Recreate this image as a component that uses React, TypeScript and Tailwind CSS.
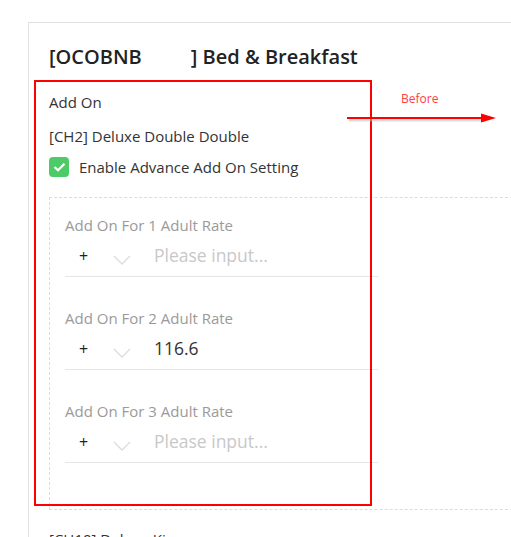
import React from "react";

const rates = [
  { label: "Add On For 1 Adult Rate", value: "" },
  { label: "Add On For 2 Adult Rate", value: "116.6" },
  { label: "Add On For 3 Adult Rate", value: "" },
];

function Chevron() {
  return (
    <svg width="18" height="10" viewBox="0 0 18 10" className="mt-2">
      <path d="M1 1 L9 9 L17 1" fill="none" stroke="#dcdcdc" strokeWidth="1.3" />
    </svg>
  );
}

export default function App() {
  return (
    <div className="relative h-[537px] w-[511px] overflow-hidden bg-white font-['Open_Sans',sans-serif] text-[#333]">
      {/* Card */}
      <div className="ml-[28px] mt-[22px] w-[520px] border border-r-0 border-b-0 border-[#e0e0e0] pl-[20px] pt-[20px]">
        <h1 className="flex h-[28px] items-center text-[20px] font-semibold leading-[28px] text-[#222]">
          <span>[OCOBNB</span>
          <span className="w-[49px]" />
          <span>] Bed &amp; Breakfast</span>
        </h1>

        <div className="mt-[21px] text-[15px] leading-[20px]">Add On</div>
        <div className="mt-[14px] text-[15px] leading-[20px]">[CH2] Deluxe Double Double</div>

        <div className="mt-[11px] flex items-center gap-[10px]">
          <div className="flex h-[20px] w-[20px] items-center justify-center rounded-[4px] bg-[#4ccb67]">
            <svg width="13" height="10" viewBox="0 0 13 10">
              <path d="M1.5 5 L5 8.3 L11.5 1.7" fill="none" stroke="white" strokeWidth="2.2" />
            </svg>
          </div>
          <span className="text-[15px] leading-[20px]">Enable Advance Add On Setting</span>
        </div>

        {/* Advance settings */}
        <div className="mt-[20px] border border-r-0 border-dashed border-[#dcdcdc] pb-[46px] pl-[15px] pt-[17px]">
          {rates.map((r, i) => (
            <div key={r.label} className={i > 0 ? "mt-[31px]" : ""}>
              <div className="text-[15px] leading-[20px] text-[#9a9a9a]">{r.label}</div>
              <div className="flex h-[42px] w-[313px] items-center border-b border-[#e6e6e6]">
                <span className="ml-[14px] w-[10px] text-[16px] text-[#222]">+</span>
                <span className="ml-[24px] flex items-center">
                  <Chevron />
                </span>
                <span
                  className={
                    "ml-[23px] text-[17.5px] " + (r.value ? "text-[#333]" : "text-[#c8c8c8]")
                  }
                >
                  {r.value || "Please input..."}
                </span>
              </div>
            </div>
          ))}
        </div>

        <div className="mt-[19px] text-[15px] leading-[20px]">[CH10] Deluxe King</div>
      </div>

      {/* Annotation overlay */}
      <div className="absolute left-[34px] top-[80px] h-[426px] w-[338px] border-2 border-[#ff0000]" />
      <div className="absolute left-[401px] top-[91px] text-[12px] leading-[16px] text-[#ff4040]">Before</div>
      <svg className="absolute left-[345px] top-[110px]" width="160" height="16" viewBox="0 0 160 16">
        <line x1="4" y1="10" x2="140" y2="10" stroke="#bbb" strokeWidth="3" opacity="0.5" />
        <line x1="2" y1="8" x2="138" y2="8" stroke="#ff0000" strokeWidth="2" />
        <path d="M136 3.5 L151 8 L136 12.5 Z" fill="#ff0000" />
      </svg>
    </div>
  );
}
